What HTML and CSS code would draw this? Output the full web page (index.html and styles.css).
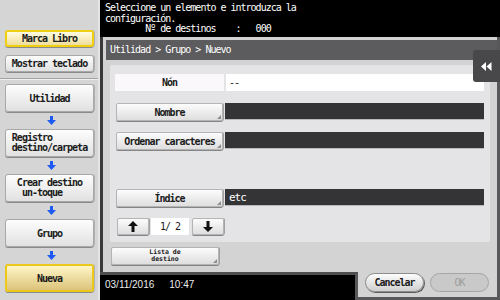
FILE: index.html
```html
<!DOCTYPE html>
<html lang="es">
<head>
    <meta charset="UTF-8">
    <title>Nuevo grupo</title>
    <link rel="stylesheet" href="styles.css">
</head>
<body>
    <div class="screen">
        <aside class="sidebar">
            <div class="side-btn short gold">Marca Libro</div>
            <div class="side-btn short gap-top">Mostrar teclado</div>
            <hr class="side-sep">
            <div class="side-btn tall">Utilidad</div>
            <div class="step-arrow"><svg width="9" height="9" viewBox="0 0 9 9"><path d="M3 0h3v4h3l-4.5 5L0 4h3z"/></svg></div>
            <div class="side-btn tall"><span class="two-line">Registro<br>destino/carpeta</span></div>
            <div class="step-arrow"><svg width="9" height="9" viewBox="0 0 9 9"><path d="M3 0h3v4h3l-4.5 5L0 4h3z"/></svg></div>
            <div class="side-btn tall"><span class="two-line">Crear destino<br>&nbsp;un-toque</span></div>
            <div class="step-arrow"><svg width="9" height="9" viewBox="0 0 9 9"><path d="M3 0h3v4h3l-4.5 5L0 4h3z"/></svg></div>
            <div class="side-btn tall">Grupo</div>
            <div class="step-arrow"><svg width="9" height="9" viewBox="0 0 9 9"><path d="M3 0h3v4h3l-4.5 5L0 4h3z"/></svg></div>
            <div class="side-btn tall gold-deep">Nueva</div>
        </aside>

        <main class="main">
            <div class="message">Seleccione un elemento e introduzca la
configuración.
        Nº de destinos    :   000</div>

            <section class="panel">
                <div class="crumb">Utilidad &gt; Grupo &gt; Nuevo</div>
                <div class="tab-toggle"><svg width="11" height="9" viewBox="0 0 11 9"><path d="M0 4.5L5 0v9zM5.5 4.5L10.5 0v9z"/></svg></div>

                <div class="form-box">
                    <div class="name-row">
                        <div class="name-label">Nón</div>
                        <div class="name-value">--</div>
                    </div>
                    <div class="field-row first">
                        <div class="key-btn">Nombre</div>
                        <div class="field"></div>
                    </div>
                    <div class="field-row second">
                        <div class="key-btn">Ordenar caracteres</div>
                        <div class="field"></div>
                    </div>
                    <div class="field-row third">
                        <div class="key-btn">Índice</div>
                        <div class="field">etc</div>
                    </div>
                    <div class="pager">
                        <div class="key-btn arrow-btn"><svg width="10" height="11" viewBox="0 0 10 11"><path d="M5 0l5 5H6.5v6h-3V5H0z"/></svg></div>
                        <div class="page-num">1/ 2</div>
                        <div class="key-btn arrow-btn"><svg width="10" height="11" viewBox="0 0 10 11"><path d="M5 11l5-5H6.5V0h-3v6H0z"/></svg></div>
                    </div>
                </div>

                <div class="key-btn list-btn">Lista de<br>destino</div>
            </section>

            <div class="footer">
                <div class="clock"><span>03/11/2016</span><span>10:47</span></div>
                <div class="actions">
                    <div class="pill">Cancelar</div>
                    <div class="pill disabled">OK</div>
                </div>
            </div>
        </main>
    </div>
</body>
</html>
```

FILE: styles.css
```css
body {
    margin: 0;
    width: 500px;
    height: 300px;
    overflow: hidden;
    font-family: "DejaVu Sans Mono", monospace;
    font-size: 10px;
    letter-spacing: -1px;
    color: #1b1b1b;
}
.screen {
    display: flex;
    height: 300px;
}

/* left column */
.sidebar {
    width: 100px;
    flex-shrink: 0;
    background-color: #d5d5d5;
    padding-top: 30px;
    box-sizing: border-box;
    border-right: 2px solid #e4e4e4;
}
.side-btn {
    margin-left: 5px;
    width: 89px;
    box-sizing: border-box;
    border: 1px solid #a8a8a8;
    border-radius: 3px;
    background: linear-gradient(#fdfdfd, #e1e1e1);
    box-shadow: 0 1px 0 #8a8a8a, 1px 0 0 #b0b0b0;
    display: flex;
    align-items: center;
    justify-content: center;
    font-weight: bold;
}
.side-btn.short {
    height: 17px;
}
.side-btn.tall {
    height: 28px;
}
.side-btn.gap-top {
    margin-top: 8px;
}
.gold {
    border: 2px solid #f0cf10;
    background: linear-gradient(#fffbe2, #efdf9c);
}
.gold-deep {
    border: 2px solid #ecc81a;
    background: linear-gradient(#fff6c6, #dcc37a);
}
.two-line {
    display: inline-block;
    text-align: left;
    line-height: 10px;
}
.side-sep {
    margin: 6px 0 4px;
    height: 0;
    border: 0;
    border-top: 1px solid #a2a2a2;
    border-bottom: 1px solid #efefef;
}
.step-arrow {
    height: 17px;
    display: flex;
    align-items: center;
    justify-content: center;
    padding-left: 5px;
}
.step-arrow svg {
    fill: #1d5af2;
}

/* right column */
.main {
    flex: 1;
    display: flex;
    flex-direction: column;
    background-color: #000;
    min-width: 0;
}
.message {
    height: 37px;
    box-sizing: border-box;
    padding: 3px 0 0 5px;
    color: #fff;
    line-height: 10.5px;
    white-space: pre;
}
.panel {
    position: relative;
    flex: 1;
    background-color: #d3d3d3;
    border-left: 3px solid #3a3a3a;
    border-right: 3px solid #58575a;
    padding: 3px 0 0 3px;
    display: flex;
    flex-direction: column;
}
.crumb {
    height: 20px;
    line-height: 20px;
    background-color: #5c5b5d;
    color: #fff;
    padding-left: 4px;
}
.tab-toggle {
    position: absolute;
    top: 13px;
    right: -3px;
    width: 27px;
    height: 32px;
    background-color: #48474a;
    border-radius: 3px 0 0 3px;
    display: flex;
    align-items: center;
    justify-content: center;
}
.tab-toggle svg {
    fill: #fff;
}
.form-box {
    margin: 5px 7px 0 4px;
    padding: 9px 6px 7px 5px;
    background-color: #e4e3e6;
    border-radius: 2px;
}
.name-row {
    display: flex;
    gap: 2px;
    height: 17px;
    line-height: 17px;
}
.name-label {
    width: 109px;
    text-align: center;
    font-weight: bold;
    background-color: #fbf8fb;
}
.name-value {
    flex: 1;
    background-color: #fff;
    padding-left: 3px;
}
.field-row {
    display: flex;
    gap: 2px;
    padding-left: 1px;
    height: 18px;
}
.field-row.first {
    margin-top: 12px;
}
.field-row.second {
    margin-top: 11px;
}
.field-row.third {
    margin-top: 39px;
}
.key-btn {
    position: relative;
    width: 107px;
    height: 18px;
    box-sizing: border-box;
    border: 1px solid #b4b4b4;
    border-radius: 2px;
    background: linear-gradient(#fcfcfc, #dedede);
    box-shadow: 0 1px 0 #858585, 1px 0 0 #a0a0a0;
    display: flex;
    align-items: center;
    justify-content: center;
    font-weight: bold;
}
.key-btn::after {
    content: "";
    position: absolute;
    right: 1px;
    bottom: 1px;
    border-left: 4px solid transparent;
    border-bottom: 4px solid #8c8c8c;
}
.field {
    flex: 1;
    height: 17px;
    line-height: 17px;
    background-color: #343336;
    border-bottom: 1px solid #b9b9bb;
    box-sizing: border-box;
    color: #fff;
    font-size: 11px;
    padding-left: 4px;
}
.pager {
    display: flex;
    gap: 2px;
    margin-top: 11px;
    padding-left: 2px;
    height: 17px;
}
.arrow-btn {
    width: 32px;
    height: 17px;
}
.arrow-btn::after {
    display: none;
}
.arrow-btn svg {
    fill: #111;
}
.page-num {
    width: 38px;
    margin-right: 1px;
    background-color: #fff;
    text-align: center;
    line-height: 17px;
}
.list-btn {
    margin: 5px 0 0 5px;
    width: 108px;
    font-size: 6.5px;
    line-height: 7px;
    letter-spacing: 0;
    text-align: center;
}

/* bottom bar */
.footer {
    height: 28px;
    display: flex;
}
.clock {
    width: 258px;
    box-sizing: border-box;
    border-top: 3px solid #4e4d50;
    border-right: 3px solid #58575a;
    padding: 4px 0 0 5px;
    display: flex;
    gap: 15px;
    font-family: "Liberation Sans", Arial, sans-serif;
    font-size: 10px;
    letter-spacing: 0;
    line-height: 12px;
    color: #ececec;
}
.actions {
    flex: 1;
    background-color: #d3d3d3;
    border-right: 3px solid #58575a;
    border-bottom: 3px solid #58575a;
    display: flex;
    gap: 6px;
    padding: 1px 0 0 7px;
}
.pill {
    width: 59px;
    height: 19px;
    box-sizing: border-box;
    border: 1px solid #8c8c8c;
    border-radius: 10px;
    background: linear-gradient(#fdfdfd, #cfcfcf);
    box-shadow: 1px 1px 0 #5c5c5c;
    display: flex;
    align-items: center;
    justify-content: center;
    font-weight: bold;
}
.pill.disabled {
    background: #c9c9c9;
    border-color: #a6a6a6;
    box-shadow: none;
    color: #9d9d9d;
    font-weight: normal;
}
```
